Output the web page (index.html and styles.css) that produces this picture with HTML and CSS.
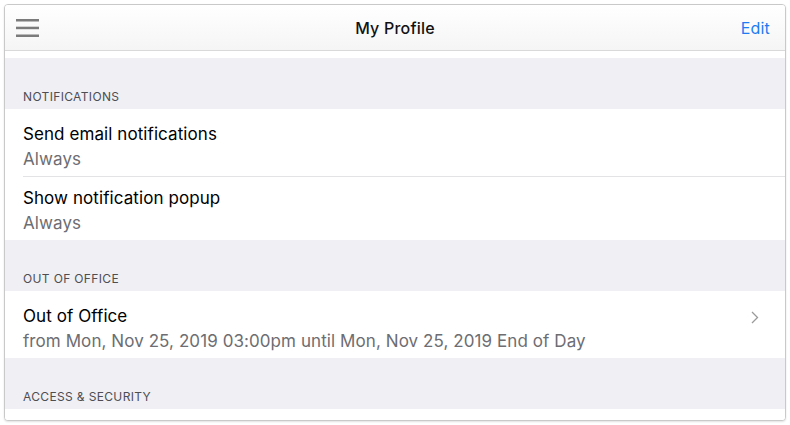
FILE: index.html
```html
<!DOCTYPE html>
<html>
<head>
<meta charset="utf-8">
<link rel="stylesheet" href="styles.css">
</head>
<body>
<div class="frame">
  <header class="nav">
    <svg class="menu" width="23" height="19" viewBox="0 0 23 19">
      <rect x="0" y="0" width="23" height="2.5" fill="#7b7b7b"/>
      <rect x="0" y="7.7" width="23" height="2.5" fill="#7b7b7b"/>
      <rect x="0" y="15.5" width="23" height="2.5" fill="#7b7b7b"/>
    </svg>
    <div class="title">My Profile</div>
    <div class="edit">Edit</div>
  </header>
  <div class="gap"></div>
  <div class="section-head">NOTIFICATIONS</div>
  <div class="list">
    <div class="row">
      <div class="row-text">
        <div class="row-title">Send email notifications</div>
        <div class="row-sub">Always</div>
      </div>
    </div>
    <div class="row">
      <div class="row-text">
        <div class="row-title">Show notification popup</div>
        <div class="row-sub">Always</div>
      </div>
    </div>
  </div>
  <div class="section-head">OUT OF OFFICE</div>
  <div class="list">
    <div class="row">
      <div class="row-text">
        <div class="row-title">Out of Office</div>
        <div class="row-sub">from Mon, Nov 25, 2019 03:00pm until Mon, Nov 25, 2019 End of Day</div>
      </div>
      <svg class="chev" width="8" height="13" viewBox="0 0 8 13">
        <path d="M1 1 L6.5 6.5 L1 12" fill="none" stroke="#9a9a9a" stroke-width="1.3"/>
      </svg>
    </div>
  </div>
  <div class="section-head">ACCESS &amp; SECURITY</div>
  <div class="list tail"></div>
</div>
</body>
</html>
```

FILE: styles.css
```css
html, body {
  margin: 0;
  padding: 0;
  background: #ffffff;
}
body {
  font-family: Inter, "Liberation Sans", Arial, sans-serif;
  width: 790px;
  height: 425px;
  overflow: hidden;
}
.frame {
  margin: 4px 0 0 4px;
  width: 780px;
  height: 415px;
  border: 1px solid #c9c9c9;
  border-radius: 4px;
  box-shadow: 0 1px 2px rgba(0,0,0,0.12);
  overflow: hidden;
  background: #ffffff;
}
.nav {
  height: 45px;
  border-bottom: 1px solid #d9d9d9;
  background: linear-gradient(#ffffff, #f5f5f5);
  display: flex;
  align-items: center;
  justify-content: space-between;
  padding: 0 15px 0 11px;
  position: relative;
}
.menu {
  display: block;
  margin-top: 2px;
}
.title {
  position: absolute;
  left: 0;
  right: 0;
  text-align: center;
  font-size: 16px;
  font-weight: 500;
  letter-spacing: 0.2px;
  color: #111;
  pointer-events: none;
}
.edit {
  font-size: 16px;
  letter-spacing: 0.2px;
  color: #1b7cf3;
}
.gap {
  height: 7px;
}
.section-head {
  height: 51px;
  box-sizing: border-box;
  background: #efeff4;
  padding: 0 18px 4px;
  display: flex;
  align-items: flex-end;
  font-size: 12px;
  line-height: 16px;
  letter-spacing: 0.35px;
  color: #4d4d52;
}
.list {
  background: #fff;
  padding-top: 4px;
  padding-left: 18px;
}
.list.tail {
  height: 11px;
  padding-top: 0;
}
.row {
  display: flex;
  align-items: flex-start;
  padding: 9px 26px 4px 0;
}
.row + .row {
  border-top: 1px solid #e3e3e6;
}
.row-text {
  flex: 1;
}
.row-title {
  font-size: 17px;
  line-height: 25px;
  letter-spacing: 0.08px;
  color: #000;
}
.row-sub {
  font-size: 17px;
  line-height: 25px;
  letter-spacing: 0.08px;
  color: #6d6d72;
}
.chev {
  display: block;
  margin-top: 7px;
}
```
